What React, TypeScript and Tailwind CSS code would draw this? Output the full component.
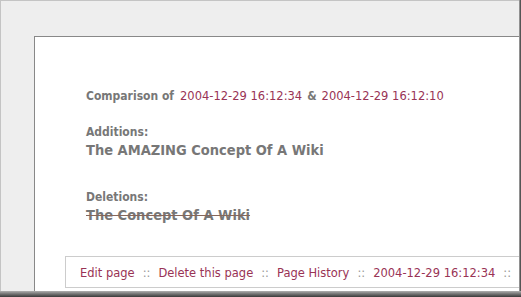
import * as React from "react";

const link = "text-[#993355]";
const heavy = "font-['DejaVu_Sans_Condensed','DejaVu_Sans',sans-serif] font-bold text-[#777777]";

const Sep = () => <span className="text-[#999999] mx-[8px]">::</span>;

export default function App() {
  return (
    <div className="w-[521px] h-[297px] flex flex-col overflow-hidden font-['DejaVu_Sans',Verdana,sans-serif]">
      <div className="flex flex-1 min-h-0">
        <div className="flex-1 flex flex-col bg-[#eeeeee] border-t border-l border-[#c4c4c4] pl-[33px] pt-[35px]">
          <div className="flex-1 bg-white border-t border-l border-[#888888] flex flex-col">
            <div className="pl-[51px] pt-[50px]">
              <div className="flex items-baseline">
                <span className={`${heavy} text-[12px]`}>Comparison of</span>
                <a className={`${link} text-[11.5px] ml-[6px]`}>2004-12-29 16:12:34</a>
                <span className={`${heavy} text-[12px] mx-[5px]`}>&amp;</span>
                <a className={`${link} text-[11.5px]`}>2004-12-29 16:12:10</a>
              </div>
              <div className={`${heavy} mt-[18px] text-[12px]`}>Additions:</div>
              <div className={`${heavy} text-[14.5px] leading-[19px]`}>The AMAZING Concept Of A Wiki</div>
              <div className={`${heavy} mt-[28px] text-[12px]`}>Deletions:</div>
              <div className={`${heavy} text-[14.5px] leading-[19px] line-through decoration-[#85675a]`}>The Concept Of A Wiki</div>
            </div>
            <div className="mt-auto mb-[3px] ml-[30px] border border-r-0 border-[#cccccc] h-[32px] flex items-center pt-[3px] pl-[14px] text-[11.5px] whitespace-nowrap">
              <a className={link}>Edit page</a>
              <Sep />
              <a className={link}>Delete this page</a>
              <Sep />
              <a className={link}>Page History</a>
              <Sep />
              <a className={link}>2004-12-29 16:12:34</a>
              <Sep />
            </div>
          </div>
        </div>
        <div className="w-[5px] bg-gradient-to-r from-[#b0b0b0] to-[#3a3a3a]" />
      </div>
      <div className="h-[6px] bg-gradient-to-b from-[#b0b0b0] to-[#3a3a3a]" />
    </div>
  );
}
